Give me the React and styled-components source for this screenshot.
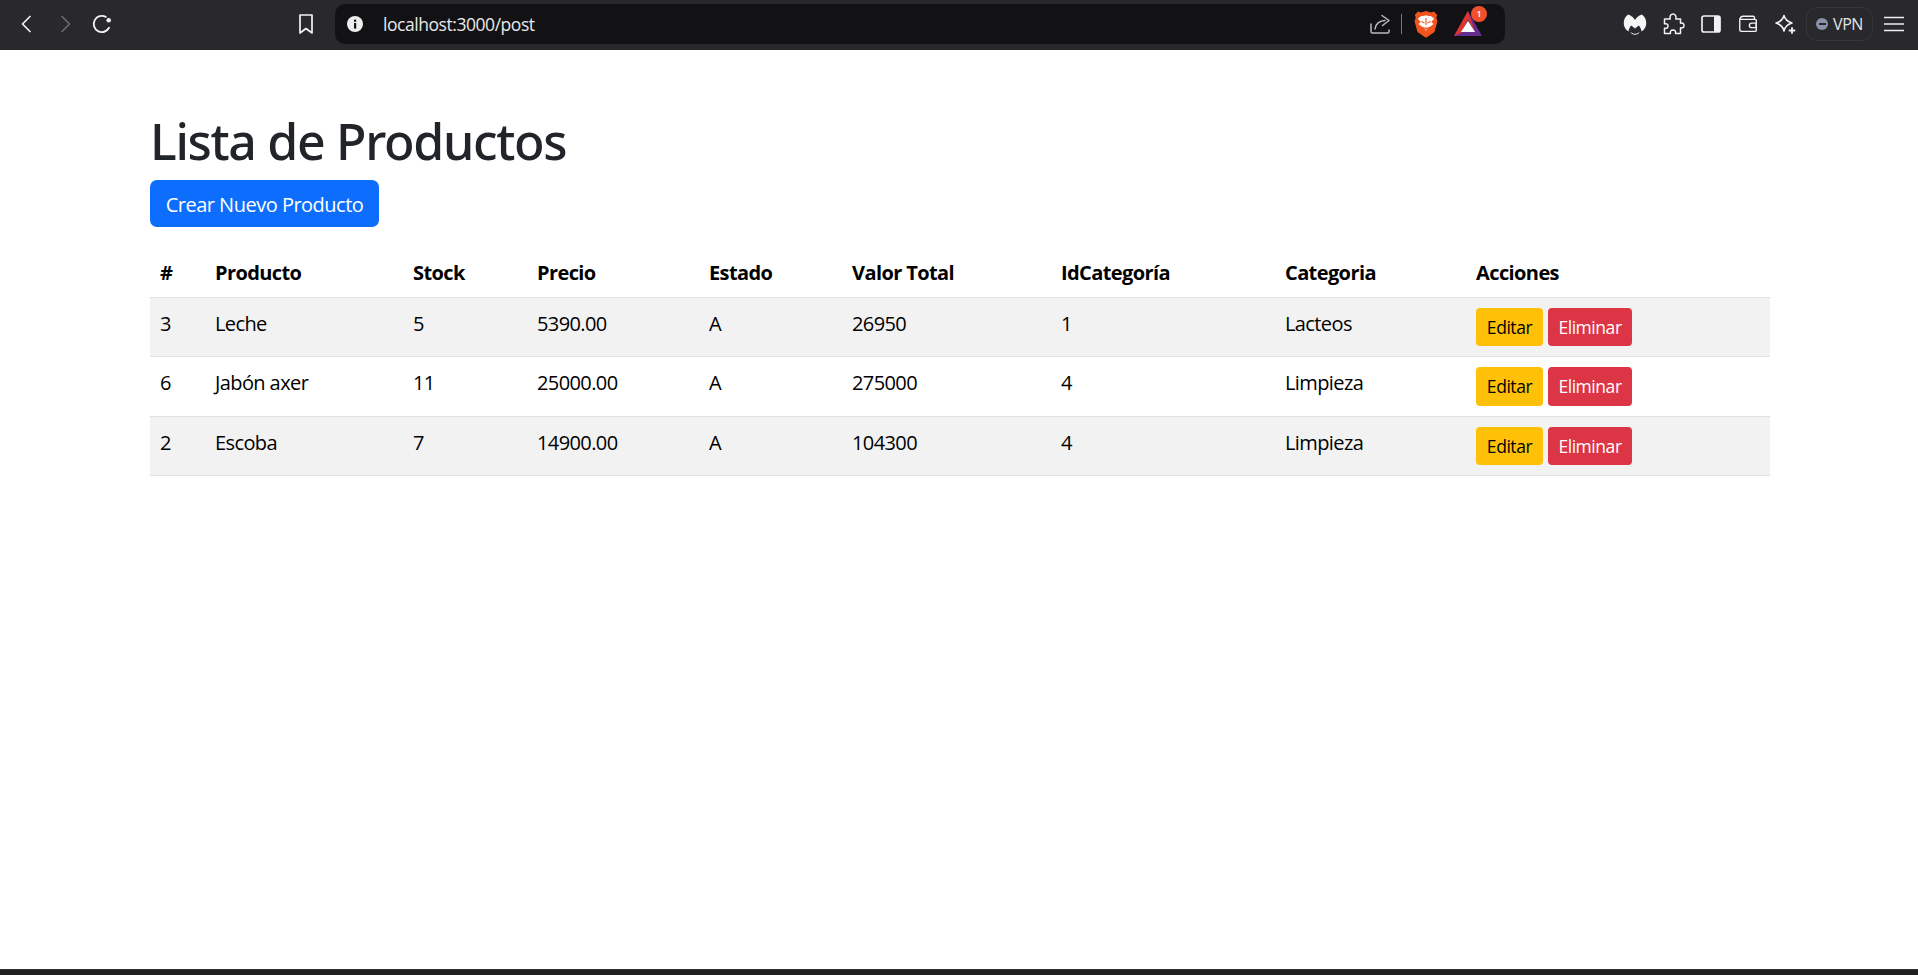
import React from "react";
import styled, { createGlobalStyle } from "styled-components";

const Global = createGlobalStyle`
  html, body { margin: 0; padding: 0; background: #fff; height: 100%; overflow: hidden; }
  #root { height: 100%; }
  * { box-sizing: border-box; }
`;

const Page = styled.div`
  height: 975px;
  display: flex;
  flex-direction: column;
  font-family: "Open Sans", "Noto Sans", sans-serif;
  color: #000;
`;

const Toolbar = styled.header`
  height: 50px;
  flex: none;
  background: #28282d;
  display: flex;
  align-items: center;
  padding: 0 0 2px 8px;
`;

const IconSlot = styled.div`
  width: ${(p) => p.$w || 38}px;
  height: 38px;
  flex: none;
  margin-left: ${(p) => p.$ml || 0}px;
  display: flex;
  align-items: center;
  justify-content: center;
  color: ${(p) => p.$color || "#f2f2f2"};
`;

const AddressBar = styled.div`
  width: 1170px;
  height: 40px;
  margin-left: 10px;
  flex: none;
  background: #121214;
  border-radius: 10px;
  display: flex;
  align-items: center;
  padding-left: 11px;
`;

const Url = styled.span`
  font-family: "Open Sans", sans-serif;
  font-size: 17.5px;
  letter-spacing: -0.45px;
  color: #e8e8ea;
  margin-left: 19px;
  flex: 1;
`;

const AddressDivider = styled.span`
  width: 1px;
  height: 20px;
  background: #77777c;
  margin: 0 11px 0 8px;
`;

const BadgeWrap = styled.div`
  position: relative;
  width: 30px;
  height: 30px;
  margin: 0 22px 0 14px;
  display: flex;
  align-items: center;
  justify-content: center;
`;

const Badge = styled.span`
  position: absolute;
  top: -3px;
  right: -4px;
  width: 16px;
  height: 16px;
  border-radius: 50%;
  background: #f0512c;
  color: #fff;
  font-size: 9px;
  font-weight: 600;
  line-height: 16px;
  text-align: center;
`;

const RightTools = styled.div`
  display: flex;
  align-items: center;
  margin-left: 119px;
`;

const VpnPill = styled.div`
  width: 67px;
  height: 34px;
  margin-left: 2px;
  border: 1px solid #35353b;
  border-radius: 11px;
  display: flex;
  align-items: center;
  padding-left: 9px;
  gap: 5px;
  font-size: 16px;
  letter-spacing: -0.4px;
  color: #e4e4e6;
`;

const VpnDot = styled.span`
  width: 12px;
  height: 12px;
  flex: none;
  border-radius: 50%;
  background: #8d91a8;
  display: flex;
  align-items: center;
  justify-content: center;
  &::after {
    content: "";
    width: 7px;
    height: 2px;
    background: #28282d;
  }
`;

const Main = styled.main`
  flex: 1;
  padding: 61px 148px 0 150px;
`;

const Title = styled.h1`
  margin: 0 0 9px;
  font-family: "Noto Sans", "Open Sans", sans-serif;
  font-size: 50px;
  line-height: 60px;
  font-weight: 500;
  letter-spacing: -1.32px;
  color: #212529;
`;

const PrimaryButton = styled.button`
  display: block;
  width: 229px;
  height: 47px;
  padding: 1px 0 0;
  border: 0;
  border-radius: 7px;
  background: #0d6efd;
  color: #fff;
  font: inherit;
  font-size: 20px;
  letter-spacing: -0.5px;
`;

const Table = styled.table`
  width: 1620px;
  margin-top: 21px;
  border-collapse: collapse;
  table-layout: fixed;
  font-size: 20px;
  letter-spacing: -0.6px;
`;

const HeadCell = styled.th`
  height: 49px;
  padding: 10px;
  text-align: left;
  font-weight: 700;
  border-bottom: 1px solid #dee2e6;
`;

const Row = styled.tr`
  background: ${(p) => (p.$striped ? "#f2f2f2" : "#fff")};
`;

const Cell = styled.td`
  padding: 10px;
  vertical-align: top;
  line-height: 32px;
  border-bottom: 1px solid #dee2e6;
`;

const SmallButton = styled.button`
  height: 38.6px;
  width: ${(p) => p.$w}px;
  margin-right: 5px;
  padding: 0;
  border: 0;
  border-radius: 4px;
  background: ${(p) => p.$bg};
  color: ${(p) => p.$fg};
  font: inherit;
  font-size: 17.5px;
  letter-spacing: -0.45px;
  vertical-align: top;
`;

const BottomStrip = styled.div`
  height: 6px;
  flex: none;
  background: #1f1f1f;
  border-top: 1px solid #333;
`;

const Stroke = ({ size = 24, sw = 1.7, children }) => (
  <svg width={size} height={size} viewBox="0 0 24 24" fill="none" stroke="currentColor" strokeWidth={sw} strokeLinecap="round" strokeLinejoin="round">
    {children}
  </svg>
);

const rows = [
  ["3", "Leche", "5", "5390.00", "A", "26950", "1", "Lacteos"],
  ["6", "Jabón axer", "11", "25000.00", "A", "275000", "4", "Limpieza"],
  ["2", "Escoba", "7", "14900.00", "A", "104300", "4", "Limpieza"],
];
const heads = ["#", "Producto", "Stock", "Precio", "Estado", "Valor Total", "IdCategoría", "Categoria", "Acciones"];
const widths = [55, 198, 124, 172, 143, 209, 224, 191, 304];

export default function App() {
  return (
    <Page>
      <Global />
      <Toolbar>
        <IconSlot><Stroke><path d="M15 4.5 7.5 12l7.5 7.5" /></Stroke></IconSlot>
        <IconSlot $w={37} $color="#6c6c71"><Stroke><path d="M9 4.5 16.5 12 9 19.5" /></Stroke></IconSlot>
        <IconSlot>
          <Stroke size={26}>
            <path d="M18.5 15.5A7.5 7.5 0 1 1 15.5 5.4" />
            <circle cx="18.2" cy="8.6" r="2.1" fill="currentColor" stroke="none" />
          </Stroke>
        </IconSlot>
        <IconSlot $ml={166}>
          <Stroke size={24}><path d="M6 3h12v18l-6-4.5L6 21z" /></Stroke>
        </IconSlot>
        <AddressBar>
          <svg width="18" height="18" viewBox="0 0 18 18">
            <circle cx="9" cy="9" r="8" fill="#ededed" />
            <rect x="8" y="8" width="2.2" height="5.6" fill="#121214" />
            <rect x="8" y="4.6" width="2.2" height="2.2" fill="#121214" />
          </svg>
          <Url>localhost:3000/post</Url>
          <IconSlot $w={26} $color="#bcbcc0">
            <Stroke size={24} sw={1.5}>
              <path d="M3 12v7.5c0 .8.7 1.5 1.5 1.5h15c.8 0 1.5-.7 1.5-1.5V18" />
              <path d="M7 17c.5-5 4.5-8.5 10-8.5" />
              <path d="M14 3.5 21 8.5 14.5 13.5" />
            </Stroke>
          </IconSlot>
          <AddressDivider />
          <svg width="26" height="28" viewBox="0 0 26 28">
            <path d="M13 1 8 2.5 5 1.5 1.8 5l1 2.8L1.5 11l3 11 6.5 4.5 2 1.2 2-1.2 6.5-4.5 3-11-1.3-3.2 1-2.8L21 1.5l-3 1z" fill="#f1541f" />
            <path d="M13 5.5c-1.5 0-2.6.8-4.8.4L4.8 8.8l3 3.2-2.3 2 3.5 2.8 2 .4L13 21l2-3.8 2-.4 3.5-2.800-2.300-2 3-3.200-3.400-2.900C15.600 6.300 14.500 5.500 13 5.500z" fill="#fff" />
            <path d="M8.500 11.500l3 1.500M17.500 11.500l-3 1.500M13 8v7" stroke="#f1541f" strokeWidth="1.100" />
            <path d="M11 17.500h4l-2 2.500z" fill="#f1541f" />
          </svg>
          <BadgeWrap>
            <svg width="30" height="28" viewBox="0 0 30 28">
              <path d="M15 1 29 26H1z" fill="#662d91" />
              <path d="M15 1 1 26l7-3L15 9l7 14-3-10-4-12z" fill="#e0352b" />
              <path d="M15 1 22 23l-3-10z" fill="#e0352b" />
              <path d="M15 11l7 11H8z" fill="#fff" />
            </svg>
            <Badge>1</Badge>
          </BadgeWrap>
        </AddressBar>
        <RightTools>
          <IconSlot $ml={-8}>
            <svg width="24" height="22" viewBox="0 0 24 22">
              <path d="M5 1.500c2.800.7 5.300 2.800 7 5.500 1.700-2.700 4.200-4.800 7-5.500 3 2.200 4.700 5.800 4.200 9.800-.4 3.200-2.200 5.700-4.700 7.300-.3-2.400-1.200-4.400-2.700-6l-3.800 3-3.800-3c-1.500 1.600-2.400 3.600-2.700 6C3 17 1.200 14.500.8 11.300.3 7.300 2 3.700 5 1.500z" fill="#f5f5f5" />
              <path d="M7.500 18.800c2.800 2.700 6.200 2.700 9 0-.5 2.200-2.500 2.900-4.500 2.900s-4-.7-4.500-2.900z" fill="#f5f5f5" />
            </svg>
          </IconSlot>
          <IconSlot>
            <Stroke size={24} sw={1.5}>
              <path d="M3.500 7h5.700c-.9-3.200 1-5 2.800-5s3.700 1.800 2.800 5h4.700v4.200c2.700-.7 3.500 1 3.500 2.300s-.8 3-3.500 2.300v5.700h-5c.6-2.500-.8-3.500-2.500-3.500s-3.100 1-2.500 3.500H3.500v-5.300c2.500.6 3.500-.8 3.500-2.200s-1-2.800-3.500-2.200z" />
            </Stroke>
          </IconSlot>
          <IconSlot>
            <svg width="20" height="20" viewBox="0 0 20 20">
              <rect x="1" y="2" width="18" height="16" rx="2" fill="none" stroke="#f2f2f2" strokeWidth="1.7" />
              <rect x="13" y="2" width="6" height="16" fill="#f2f2f2" />
            </svg>
          </IconSlot>
          <IconSlot $w={36}>
            <Stroke size={22} sw={1.5}>
              <path d="M3 6.500V18c0 1.100.9 2 2 2h15c.6 0 1-.4 1-1V8c0-.6-.4-1-1-1H4.500" />
              <path d="M3.500 6c.4-1.500 1.500-2.500 3-2.500h11c1 0 1.500.7 1.500 1.500v2" />
              <path d="M21 11h-5a2.500 2.500 0 0 0 0 5h5z" />
            </Stroke>
          </IconSlot>
          <IconSlot>
            <Stroke size={24} sw={1.6}>
              <path d="M11 3.500c1 4 3 6 8 7.500-5 1.500-7 3.500-8 8-1-4.500-3-6.500-8-8 5-1.500 7-3.500 8-7.500z" />
              <path d="M19 16v5M16.500 18.500h5" strokeWidth="1.8" />
            </Stroke>
          </IconSlot>
          <VpnPill><VpnDot />VPN</VpnPill>
          <IconSlot $w={42}>
            <svg width="20" height="16" viewBox="0 0 20 16">
              <path d="M0 1.500h20M0 8h20M0 14.500h20" stroke="#f0f0f0" strokeWidth="1.6" />
            </svg>
          </IconSlot>
        </RightTools>
      </Toolbar>
      <Main>
        <Title>Lista de Productos</Title>
        <PrimaryButton>Crear Nuevo Producto</PrimaryButton>
        <Table>
          <colgroup>
            {widths.map((w, i) => <col key={i} style={{ width: w }} />)}
          </colgroup>
          <thead>
            <tr>{heads.map((h) => <HeadCell key={h}>{h}</HeadCell>)}</tr>
          </thead>
          <tbody>
            {rows.map((r, i) => (
              <Row key={r[0]} $striped={i % 2 === 0}>
                {r.map((c, j) => <Cell key={j}>{c}</Cell>)}
                <Cell>
                  <SmallButton $w={67} $bg="#ffc107" $fg="#000">Editar</SmallButton>
                  <SmallButton $w={84} $bg="#dc3545" $fg="#fff">Eliminar</SmallButton>
                </Cell>
              </Row>
            ))}
          </tbody>
        </Table>
      </Main>
      <BottomStrip />
    </Page>
  );
}
